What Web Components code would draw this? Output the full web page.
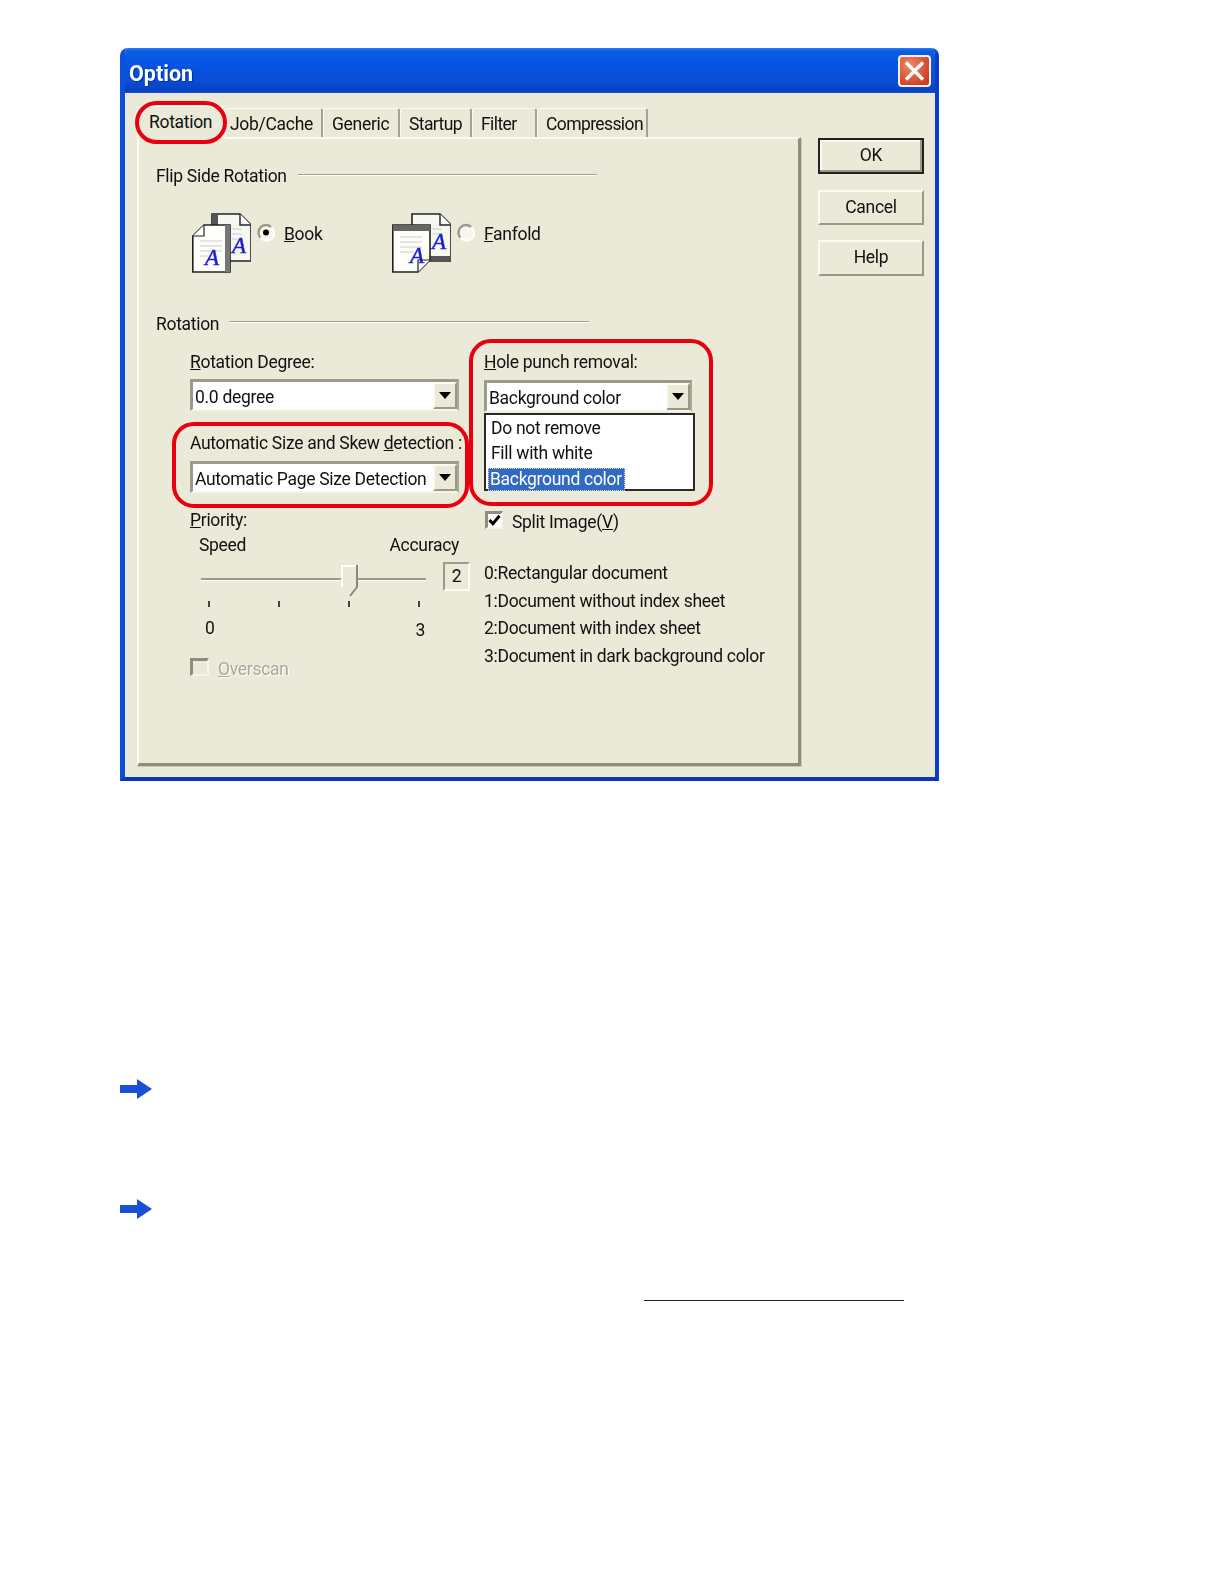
<!DOCTYPE html>
<html>
<head>
<meta charset="utf-8">
<title>Option</title>
<style>
  html, body { margin:0; background:#fff; }
  body { font-family:Roboto, "Liberation Sans", sans-serif; font-size:17.5px; letter-spacing:-.3px; color:#111; }
</style>
</head>
<body>
<option-page></option-page>
<script>
// small helper: a custom element that is only a shadow root with css + markup
function simple(name, css, html) {
    const template = document.createElement('template');
    template.innerHTML = `<style>${css}</style>${html}`;
    customElements.define(name, class extends HTMLElement {
        constructor() {
            super();
            this.attachShadow({ mode: 'open' }).appendChild(template.content.cloneNode(true));
        }
    });
}

simple('xp-label', `
  :host { display:block; line-height:20px; white-space:nowrap; }
`, `<slot></slot>`);

simple('xp-heading', `
  :host { display:flex; gap:10px; line-height:20px; white-space:nowrap; }
  i { flex:1; height:2px; margin-top:var(--line, 8px); background:linear-gradient(#a3a190 50%, #fff 50%); }
`, `<span><slot></slot></span><i></i>`);

simple('xp-button', `
  :host { display:flex; align-items:center; justify-content:center; box-sizing:border-box; width:106px; height:36px; padding-bottom:2px;
    background:#ebe9d8; border:2px solid; border-color:#fbfaf3 #9a9886 #9a9886 #fbfaf3; }
  :host([default]) { padding-bottom:3px; border-color:#222; box-shadow:inset -2px -2px 0 #9a9886, inset 2px 2px 0 #fbfaf3; }
`, `<slot></slot>`);

simple('xp-combo', `
  :host { display:flex; box-sizing:border-box; height:32px; background:#fff; border-style:solid; border-width:3px 2px 2px 3px;
    border-color:#9c9a88 #a8a694 #f6f5ec #9c9a88; line-height:20px; white-space:nowrap; }
  span { flex:1; padding:2px 0 0 2px; align-self:center; }
  b { display:flex; align-items:center; justify-content:center; box-sizing:border-box; width:24px; background:#ebe9d8;
    border:2px solid; border-color:#fbfaf3 #9a9886 #9a9886 #fbfaf3; }
  b::after { content:""; border:6px solid transparent; border-top:7px solid #000; border-bottom:0; }
`, `<span><slot></slot></span><b></b>`);

simple('xp-list', `
  :host { display:block; box-sizing:border-box; height:78px; padding:1px 0 0 5px; background:#fff; border:2px solid #2a2a2a; line-height:25px; white-space:nowrap; }
`, `<slot></slot>`);

simple('xp-radio', `
  :host { display:flex; gap:9px; align-items:center; height:20px; line-height:20px; white-space:nowrap; }
  svg { display:block; margin-top:-4px; }
  .dot { fill:#000; visibility:hidden; }
  :host([checked]) .dot { visibility:visible; }
`, `<svg width="18" height="19" viewBox="0 0 18 19">
    <circle cx="9" cy="9.5" r="7.5" fill="#f7f6ef"/>
    <path d="M3.2 14.4A7.6 7.6 0 0 1 14 3.8" fill="none" stroke="#9c9a88" stroke-width="2.4"/>
    <path d="M15 4.6A7.6 7.6 0 0 1 4.2 15.4" fill="none" stroke="#fff" stroke-width="2"/>
    <circle class="dot" cx="9" cy="9.5" r="3"/>
  </svg><span><slot></slot></span>`);

simple('xp-check', `
  :host { display:flex; gap:9px; align-items:flex-start; line-height:20px; white-space:nowrap; }
  span { padding-top:1px; }
  i { display:block; box-sizing:border-box; width:18px; height:18px; background:#fff; border-style:solid; border-width:3px 2px 2px 3px;
    border-color:#8f8d7c #f6f5ec #f6f5ec #8f8d7c; position:relative; }
  svg { position:absolute; left:0; top:0; display:none; }
  :host([checked]) svg { display:block; }
  :host([disabled]) { color:#aca899; text-shadow:1px 1px 0 #fff; }
  :host([disabled]) i { width:19px; background:#ebe9d8; }
`, `<i><svg width="13" height="13" viewBox="0 0 13 13"><path d="M1.5 6l3.4 3.8L11.5 1.8" fill="none" stroke="#000" stroke-width="3"/></svg></i><span><slot></slot></span>`);

simple('red-ring', `
  :host { display:block; position:relative; }
  i { position:absolute; top:var(--t); left:var(--l); right:var(--r); bottom:var(--b); border:4px solid #e8000f;
    border-radius:var(--rad, 22px); pointer-events:none; z-index:3; }
`, `<slot></slot><i></i>`);

simple('xp-tab', `
  :host { display:block; box-sizing:border-box; height:29px; padding-top:5px; line-height:20px; white-space:nowrap; background:#ebe9d8;
    border-top:1px solid #fbfaf3; border-left:1px solid #fbfaf3; border-right:2px solid #a3a190; border-radius:3px 3px 0 0; }
  :host([active]) { height:33px; margin-bottom:-2px; border-right:0; }
`, `<slot></slot>`);

simple('xp-slider', `
  :host { display:block; width:280px; }
  .top { display:flex; position:relative; height:29px; }
  .track { margin:16px 0 0 11px; width:225px; height:3px; background:linear-gradient(#9c9a88 66%, #fff 66%); }
  .thumb { position:absolute; left:151px; top:3px; }
  .value { margin-left:17px; box-sizing:border-box; width:27px; height:29px; text-align:center; line-height:25px; background:#ebe9d8;
    border-style:solid; border-width:2px; border-color:#9c9a88 #fbfaf3 #fbfaf3 #9c9a88; }
  .ticks { display:flex; justify-content:space-between; width:212px; margin:10px 0 0 18px; }
  .ticks i { width:2px; height:6px; background:#444; }
  .scale { display:flex; justify-content:space-between; width:220px; margin:11px 0 0 15px; line-height:20px; }
  .scale span + span { margin-top:2px; }
`, `<div class="top">
    <div class="track"></div>
    <svg class="thumb" width="18" height="33" viewBox="0 0 18 33">
      <path d="M1 1H16V22L8.5 31 1 22Z" fill="#ebe9d8"/>
      <path d="M1 22V1H15" fill="none" stroke="#fff" stroke-width="2"/>
      <path d="M16 0V22L9 31" fill="none" stroke="#8b8977" stroke-width="2"/>
    </svg>
    <div class="value">2</div>
  </div>
  <div class="ticks"><i></i><i></i><i></i><i></i></div>
  <div class="scale"><span>0</span><span>3</span></div>`);

simple('book-icon', `:host { display:block; width:59px; height:60px; } svg { display:block; }
  text { font:italic 23px "Liberation Serif", serif; fill:#1c1cd0; stroke:#1c1cd0; stroke-width:.5; }`,
`<svg width="59" height="60" viewBox="0 0 59 60">
    <path d="M20 1H48L59 12V48H20Z" fill="#f8f8f3" stroke="#222" stroke-width="1.6"/>
    <path d="M48 1V12H59" fill="#fff" stroke="#222" stroke-width="1.4"/>
    <rect x="20" y="1" width="6" height="12" fill="#555"/>
    <path d="M40 16H50M40 21H50M40 26H50" stroke="#ccc"/>
    <text x="40" y="40">A</text>
    <path d="M0.8 23L12 12H38V59H0.8Z" fill="#fdfdf9" stroke="#222" stroke-width="1.6"/>
    <path d="M0.8 23H12V12" fill="#fff" stroke="#222" stroke-width="1.2"/>
    <rect x="33" y="12" width="5" height="47" fill="#777"/>
    <path d="M8 28H30M8 33H30M8 38H30M8 43H16" stroke="#ccc"/>
    <text x="13" y="52">A</text>
  </svg>`);

simple('fanfold-icon', `:host { display:block; width:59px; height:60px; } svg { display:block; }
  text { font:italic 23px "Liberation Serif", serif; fill:#1c1cd0; stroke:#1c1cd0; stroke-width:.5; }`,
`<svg width="59" height="60" viewBox="0 0 59 60">
    <path d="M20 1H48L59 12V48H20Z" fill="#f8f8f3" stroke="#222" stroke-width="1.6"/>
    <path d="M48 1V12H59" fill="#fff" stroke="#222" stroke-width="1.4"/>
    <rect x="38" y="43" width="21" height="5" fill="#555"/>
    <path d="M40 16H50M40 21H50" stroke="#ccc"/>
    <text x="40" y="36">A</text>
    <path d="M0.8 12H38V47L26 59H0.8Z" fill="#fdfdf9" stroke="#222" stroke-width="1.6"/>
    <rect x="0.8" y="12" width="37" height="6" fill="#666"/>
    <path d="M26 59V47H38" fill="#fff" stroke="#222" stroke-width="1.2"/>
    <path d="M8 24H30M8 29H30M8 34H30M8 39H22" stroke="#ccc"/>
    <text x="18" y="50">A</text>
  </svg>`);

simple('blue-arrow', `:host { display:block; width:32px; height:20px; } svg { display:block; }`,
`<svg width="32" height="20" viewBox="0 0 32 20"><path d="M0 6H17V0L32 10 17 20V14H0Z" fill="#1a4fd8"/></svg>`);

simple('rotation-panel', `
  :host { display:block; box-sizing:border-box; width:664px; height:629px; padding:27px 0 0 17px; background:#ebe9d8;
    border-style:solid; border-width:2px 3px 3px 2px; border-color:#fbfaf3 #8f8d7c #8f8d7c #fbfaf3; box-shadow:1px 1px 0 #c9c7b6; }
  .flip { width:441px; gap:11px; }
  .sides { display:grid; grid-template-columns:200px auto; margin:27px 0 0 36px; height:60px; }
  .side { display:flex; gap:6px; }
  .side xp-radio { margin-top:11px; }
  .rot { width:433px; margin-top:41px; --line:7px; }
  .cols { display:grid; grid-template-columns:269px 210px; column-gap:25px; margin:18px 0 0 34px; }
  .combo { margin-top:7px; }
  .auto { margin-top:22px; --t:-11px; --l:-18px; --r:-10px; --b:-15px; }
  .auto xp-combo { margin-top:8px; }
  .priority { margin-top:17px; }
  .ends { display:flex; justify-content:space-between; margin-top:5px; padding-left:9px; line-height:20px; }
  xp-slider { margin-top:7px; }
  .over { margin-top:18px; }
  .hole { --t:-13px; --l:-15px; --r:-19px; --b:-15px; }
  .hole xp-combo { width:208px; margin-top:8px; }
  xp-list { width:211px; margin-top:1px; }
  mark { display:inline-block; height:23px; line-height:23px; margin:2px 0 0 -3px; padding:0 3px 0 2px; color:#fff; background:#316ac5; outline:1px dotted #d8d8c8; outline-offset:-1px; vertical-align:top; }
  .split { margin:20px 0 0 1px; }
  .notes { margin-top:28px; line-height:27.5px; white-space:nowrap; }
  .notes div { height:27.5px; }
`, `
  <xp-heading class="flip">Flip Side Rotation</xp-heading>
  <div class="sides">
    <div class="side"><book-icon></book-icon><xp-radio checked><u>B</u>ook</xp-radio></div>
    <div class="side"><fanfold-icon></fanfold-icon><xp-radio><u>F</u>anfold</xp-radio></div>
  </div>
  <xp-heading class="rot">Rotation</xp-heading>
  <div class="cols">
    <div class="left">
      <xp-label><u>R</u>otation Degree:</xp-label>
      <xp-combo class="combo">0.0 degree</xp-combo>
      <red-ring class="auto">
        <xp-label>Automatic Size and Skew <u>d</u>etection :</xp-label>
        <xp-combo>Automatic Page Size Detection</xp-combo>
      </red-ring>
      <xp-label class="priority"><u>P</u>riority:</xp-label>
      <div class="ends"><span>Speed</span><span>Accuracy</span></div>
      <xp-slider></xp-slider>
      <xp-check class="over" disabled><u>O</u>verscan</xp-check>
    </div>
    <div class="right">
      <red-ring class="hole">
        <xp-label><u>H</u>ole punch removal:</xp-label>
        <xp-combo>Background color</xp-combo>
        <xp-list>
          <div>Do not remove</div>
          <div>Fill with white</div>
          <div><mark>Background color</mark></div>
        </xp-list>
      </red-ring>
      <xp-check class="split" checked>Split Image(<u>V</u>)</xp-check>
      <div class="notes">
        <div>0:Rectangular document</div>
        <div>1:Document without index sheet</div>
        <div>2:Document with index sheet</div>
        <div>3:Document in dark background color</div>
      </div>
    </div>
  </div>
`);

simple('xp-window', `
  :host { display:block; box-sizing:border-box; width:819px; height:733px; background:#ebe9d8; border-radius:8px 8px 0 0; overflow:hidden;
    filter:blur(.35px); border-left:5px solid #0d50d8; border-right:4px solid #0a3cc4; border-bottom:4px solid #0a36b8; }
  .bar { display:flex; align-items:center; justify-content:space-between; height:45px; margin:0 -4px 0 -5px; padding:0 8px 0 9px;
    background:linear-gradient(#2a7ef0 0, #0a5ce2 7%, #0654e2 40%, #0a4cd6 75%, #0640c0 96%, #1a5ad8 100%); }
  .name { padding-top:5px; font-weight:700; font-size:21.5px; letter-spacing:0; color:#fff; text-shadow:1px 1px 1px #0a2c90; }
  .close { position:relative; box-sizing:border-box; width:33px; height:32px; border:2px solid #f4f0ea; border-radius:4px;
    background:radial-gradient(circle at 35% 30%, #ec8a66, #d2482a 70%, #c03a1e); }
  .close svg { display:block; margin:3px 0 0 3px; }
  .main { display:flex; gap:17px; padding-left:12px; }
  .side { display:flex; flex-direction:column; margin-top:45px; }
`, `
  <div class="bar"><span class="name">Option</span>
    <div class="close"><svg width="23" height="22" viewBox="0 0 23 22"><path d="M3 2.5L20 19.5M20 2.5L3 19.5" stroke="#fff" stroke-width="3.4"/></svg></div>
  </div>
  <div class="main"><div><slot></slot></div><div class="side"><slot name="side"></slot></div></div>
`);

simple('option-page', `
  :host { display:block; padding:48px 0 0 120px; height:1584px; box-sizing:border-box; }
  .tabs { display:flex; align-items:flex-end; padding-top:13px; }
  .active { position:relative; z-index:2; --t:-5px; --l:-2px; --r:-2px; --b:-7px; }
  .tight { letter-spacing:-.6px; }
  rotation-panel { position:relative; }
  .b2 { margin-top:16px; height:35px; }
  .b3 { margin-top:15px; }
  .a1 { margin-top:298px; }
  .a2 { margin-top:100px; }
  .link { margin:81px 0 0 524px; width:260px; height:1px; background:#222; }
`, `
  <xp-window>
    <div class="tabs">
      <red-ring class="active"><xp-tab active style="width:88px;padding-left:11px">Rotation</xp-tab></red-ring>
      <xp-tab style="width:98px;padding-left:4px">Job/Cache</xp-tab>
      <xp-tab style="width:77px;padding-left:8px">Generic</xp-tab>
      <xp-tab class="tight" style="width:72px;padding-left:8px">Startup</xp-tab>
      <xp-tab class="tight" style="width:65px;padding-left:8px">Filter</xp-tab>
      <xp-tab class="tight" style="width:111px;padding-left:8px">Compression</xp-tab>
    </div>
    <rotation-panel></rotation-panel>
    <xp-button slot="side" default>OK</xp-button>
    <xp-button slot="side" class="b2">Cancel</xp-button>
    <xp-button slot="side" class="b3">Help</xp-button>
  </xp-window>
  <blue-arrow class="a1"></blue-arrow>
  <blue-arrow class="a2"></blue-arrow>
  <div class="link"></div>
`);
</script>
</body>
</html>
